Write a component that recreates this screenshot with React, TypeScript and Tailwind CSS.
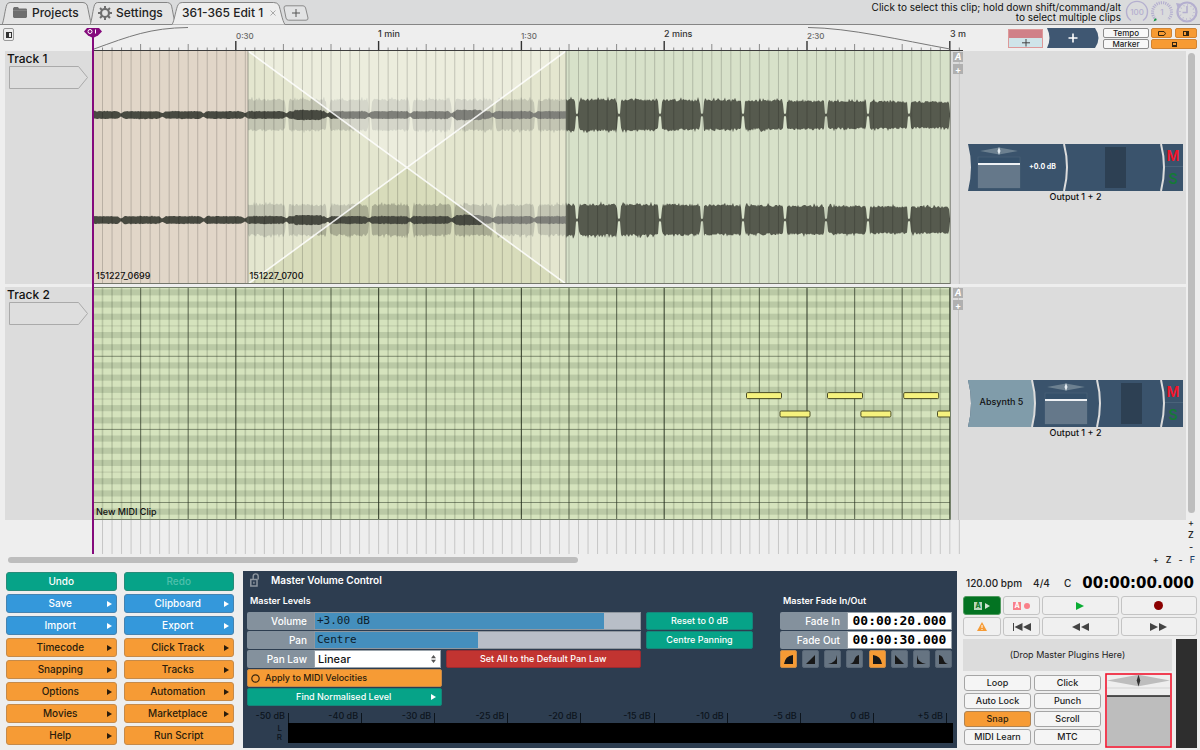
import React from "react";

const GRID_START = 93;
const BAR = 142.8;
const BEAT = BAR / 15;
const CLIP_END = 950;
const VIEW_END = 963;

function noise(n: number) {
  const v = Math.sin(n * 127.1 + 11.7) * 43758.5453;
  return v - Math.floor(v);
}

function wave(start: number, end: number, cy: number, amp: (x: number) => number) {
  const top: string[] = [];
  const bottom: string[] = [];
  for (let x = start; x <= end; x += 1) {
    const a = amp(x);
    const spikeTop = noise(x * 3 + cy) > 0.88 ? 1.12 : 1;
    const spikeBottom = noise(x * 5 + cy) > 0.88 ? 1.12 : 1;
    top.push(`${x.toFixed(1)},${(cy - a * (0.84 + noise(x + cy) * 0.16) * spikeTop).toFixed(1)}`);
    bottom.unshift(`${x.toFixed(1)},${(cy + a * (0.84 + noise(x * 2 + cy) * 0.16) * spikeBottom).toFixed(1)}`);
  }
  return `M${top.join("L")}L${bottom.join("L")}Z`;
}

const PERIOD = 41.5;
function quietAmp(x: number) {
  const p = (x - 123 + PERIOD * 10) % 41.3;
  const edge = Math.min(p, 41.3 - p);
  const swell = x > 294 && x < 322 ? 1.2 : x > 455 && x < 482 ? 1.4 : 0;
  return Math.min(4 + swell, 1.6 + edge * 0.7);
}
function loudAmp(x: number) {
  const p = (x - 247) % PERIOD;
  if (p > 38) return 1.4;
  const edge = Math.min(p, 38 - p);
  const level = x < 566 ? 16.5 : 17 - ((x - 566) / 384) * 3;
  return Math.min(level, 13 + edge * 3);
}

const beatXs = Array.from({ length: 92 }, (_, i) => GRID_START + i * BEAT).filter((x) => x < VIEW_END);

const centres = [115, 220];

function AudioTrack() {
  return (
    <svg viewBox="93 51 870 233" preserveAspectRatio="none" className="block h-[233px] w-full" aria-label="Audio clips">
      <rect x="93" y="51" width="870" height="233" fill="#dcdcdc" />
      <rect x="93" y="51" width="155" height="233" fill="#e1d6c8" />
      <rect x="248" y="51" width="318" height="233" fill="#d8dcbb" />
      <rect x="566" y="51" width="384" height="233" fill="#d7e1c9" />
      {centres.map((cy) => (
        <path key={cy} d={wave(248, 566, cy, loudAmp)} fill="#30332a" fillOpacity="0.28" />
      ))}
      <polygon points="248,51 566,51 248,284" fill="#fff" fillOpacity="0.3" />
      {centres.map((cy) => (
        <path key={cy} d={wave(93, 566, cy, quietAmp)} fill="#484a41" />
      ))}
      <polygon points="248,51 566,51 566,284" fill="#fff" fillOpacity="0.3" />
      {centres.map((cy) => (
        <path key={cy} d={wave(566, 950, cy, loudAmp)} fill="#565a4e" />
      ))}
      {beatXs.map((x) => (
        <line key={x} x1={x} x2={x} y1="51" y2="284" stroke="#000" strokeOpacity={x > CLIP_END ? 0.1 : 0.18} vectorEffect="non-scaling-stroke" />
      ))}
      <path d="M248 51L566 284M566 51L248 284" stroke="#fff" strokeOpacity="0.85" strokeWidth="1.6" fill="none" />
      <path d="M248 51V284M566 51V284M950.5 51V284" stroke="#6d7064" strokeOpacity="0.6" fill="none" />
      <path d="M93 283.5H950" stroke="#74776b" />
    </svg>
  );
}

const octaveTops = [283.2, 356.3, 429.4, 502.5];
const blackKeys = [1, 3, 5, 8, 10];
const notes = [
  [746, 392.6, 35],
  [779.5, 411, 30],
  [827, 392.6, 35],
  [860.4, 411, 30],
  [903.2, 392.6, 35],
  [937, 411, 30],
];

function MidiTrack() {
  return (
    <svg viewBox="93 287 870 233" preserveAspectRatio="none" className="block h-[233px] w-full" aria-label="MIDI clip">
      <defs>
        <clipPath id="midi-clip">
          <rect x="93" y="287" width="858" height="232" />
        </clipPath>
      </defs>
      <rect x="93" y="287" width="870" height="233" fill="#dcdcdc" />
      <g clipPath="url(#midi-clip)">
        <rect x="93" y="287" width="858" height="233" fill="#d5e3bd" />
        {octaveTops.map((t) => (
          <g key={t}>
            {blackKeys.map((k) => (
              <rect key={k} x="93" y={t + k * 6.1} width="858" height="6.1" fill="#bac9a5" />
            ))}
            <line x1="93" x2="951" y1={t + 42.7} y2={t + 42.7} stroke="#000" strokeOpacity="0.12" />
            <line x1="93" x2="951" y1={t} y2={t} stroke="#4e5a44" strokeOpacity="0.65" />
          </g>
        ))}
        {beatXs.map((x, i) => (
          <line key={x} x1={x} x2={x} y1="287" y2="520" stroke="#26301e" strokeWidth={i % 5 === 0 ? 1.2 : 1.6} strokeOpacity={i % 15 === 0 ? 0.8 : i % 5 === 0 ? 0.6 : 0.17} vectorEffect="non-scaling-stroke" />
        ))}
        {notes.map(([x, y, w]) => (
          <rect key={x} x={x + 0.5} y={y} width={w} height="6" rx="1.2" fill="#f6f27e" stroke="#4a4c25" />
        ))}
      </g>
      <path d="M93 287.5H950.5V519.5H93" fill="none" stroke="#74806a" />
      <path d="M958.5 287V520" stroke="#c4c4c4" />
    </svg>
  );
}

const rulerLabels = [
  { x: 236, text: "0:30", big: false },
  { x: 378, text: "1 min", big: true },
  { x: 521, text: "1:30", big: false },
  { x: 664, text: "2 mins", big: true },
  { x: 807, text: "2:30", big: false },
  { x: 950, text: "3 m", big: true },
];

function Ruler() {
  return (
    <div className="relative h-[26px]">
      <svg viewBox="93 25 870 26" preserveAspectRatio="none" className="block h-full w-full">
        {beatXs.map((x, i) => (
          <line key={x} x1={x} x2={x} y2="51" y1={i % 15 === 0 ? 41 : i % 5 === 0 ? 44 : 47.5} stroke={i % 15 === 0 ? "#333" : "#8a8a8a"} strokeWidth={i % 15 === 0 ? 1.4 : 1} />
        ))}
        <path d="M94 49C130 36 150 28 188 27.5" fill="none" stroke="#777" />
        <path d="M808 27.5C850 28 900 40 950 49" fill="none" stroke="#777" />
        <path d="M93 50.5H963" stroke="#3d3d3d" />
      </svg>
      {rulerLabels.map((l) => (
        <span
          key={l.text}
          className={
            l.big
              ? "absolute top-[3px] whitespace-nowrap text-[9px] leading-3 text-[#333]"
              : "absolute top-[5px] whitespace-nowrap text-[8px] leading-3 text-[#666]"
          }
          style={{ left: `${((l.x - 93) / 870) * 100}%` }}
        >
          {l.text}
        </span>
      ))}
    </div>
  );
}

function LaneButtons() {
  return (
    <div className="absolute right-0 top-[1px] flex w-[10px] flex-col gap-[2px]">
      <button aria-label="Automation" className="h-[10px] bg-[#b0b0b0] text-[9px] font-bold italic leading-[10px] text-white">A</button>
      <button aria-label="Add lane" className="h-[10px] bg-[#b0b0b0] text-[9px] font-bold leading-[9px] text-white">+</button>
    </div>
  );
}

function TrackHeader({ name }: { name: string }) {
  return (
    <div className="ml-[5px] h-[233px] bg-[#dcdcdc] pl-[2px]">
      <div className="text-[12px] leading-[15px] text-[#111]">{name}</div>
      <svg width="80" height="24" viewBox="0 0 80 24" className="ml-[2px] block">
        <path d="M.5 .5H69.5L78.5 11.5L69.5 22.5H.5Z" fill="#dedede" stroke="#aaa" />
      </svg>
    </div>
  );
}

function FaderArt({ x }: { x: number }) {
  return (
    <g>
      <path d={`M${x + 2} 7L${x + 21} 3.5L${x + 40} 7L${x + 21} 10.5Z`} fill="#6c8090" />
      <path d={`M${x + 21} 3L${x + 22.5} 7L${x + 21} 11L${x + 19.5} 7Z`} fill="#e5ecf1" />
      <rect x={x} y="13" width="42" height="31" fill="#35506a" stroke="#4b6177" strokeWidth=".7" />
      <rect x={x} y="20" width="42" height="24" fill="#65788a" />
      <rect x={x} y="19" width="42" height="2" fill="#eef1f4" />
    </g>
  );
}

function ChannelStrip({ instrument }: { instrument?: string }) {
  return (
    <div className="ml-[5px] w-[215px]">
      <div className="relative flex h-[47px] items-center">
        <svg viewBox="0 0 215 47" className="absolute inset-0 h-full w-full">
          <path d="M0 0H215V47H0Q6 23 0 0Z" fill="#3a536c" />
          {instrument && <path d="M0 0H64Q69 23 64 47H0Q6 23 0 0Z" fill="#809caa" />}
          <FaderArt x={instrument ? 77 : 10} />
          <rect x={instrument ? 153 : 137} y="3" width="21" height="41" fill="#2d4053" />
          {(instrument ? [64, 129, 193] : [96, 193]).map((x) => (
            <path key={x} d={`M${x} 0Q${x + 6} 23 ${x} 47`} fill="none" stroke="#dcdcdc" strokeWidth="2" />
          ))}
          <path d="M197 22.5H215" stroke="#4a637a" />
        </svg>
        {instrument ? (
          <span className="relative w-[67px] pb-[3px] text-center text-[9px] text-[#111]">{instrument}</span>
        ) : (
          <span className="relative ml-[61px] text-[7px] font-bold text-white">+0.0 dB</span>
        )}
        <div className="relative ml-auto mr-px flex h-[47px] w-[18px] flex-col text-[14px] font-semibold">
          <button aria-label="Mute" className="h-[23px] leading-[23px] text-[#f5132a]">M</button>
          <button aria-label="Solo" className="h-[23px] leading-[23px] text-[#147a35]">S</button>
        </div>
      </div>
      <div className="text-center text-[9px] leading-3 text-[#111]">Output 1 + 2</div>
    </div>
  );
}

function Tab({ children, active, className }: { children: React.ReactNode; active?: boolean; className: string }) {
  const fill = active ? "#eeeeee" : "#e4e4e4";
  return (
    <button role="tab" aria-selected={!!active} className={`relative flex h-[25px] items-center ${className}`}>
      <svg viewBox="0 0 100 25" preserveAspectRatio="none" className="absolute inset-0 h-full w-full">
        <path d="M0 24.5C2 22 3.5 8 5.5 4.5Q6.5 2.5 9 2.5H90Q93 2.5 94.5 5C96 9 97.5 21 100 24.5" fill={fill} stroke="#858585" vectorEffect="non-scaling-stroke" />
        {!active && <path d="M0 24.5H100" stroke="#858585" vectorEffect="non-scaling-stroke" />}
      </svg>
      <span className="relative flex items-center whitespace-nowrap text-[12px] text-[#222]">{children}</span>
    </button>
  );
}

function Header() {
  return (
    <header className="relative flex h-[25px] bg-[#dadbdc]">
      <div className="absolute inset-x-0 bottom-0 h-px bg-[#858585]" />
      <div role="tablist" className="flex">
        <Tab className="ml-[2px] w-[90px] pl-[11px]">
          <svg width="14" height="11" viewBox="0 0 14 11" className="mr-[5px]">
            <path d="M0 1.5L1 0H5L6 1.5H13.3L14 2.5V10L13 11H1L0 10Z" fill="#6e6e6e" />
            <path d="M0 3.5H14" stroke="#8b8b8b" strokeWidth=".7" />
          </svg>
          Projects
        </Tab>
        <Tab className="-ml-[2px] w-[86px] pl-[8px]">
          <svg width="14" height="14" viewBox="0 0 14 14" className="mr-[4px]">
            <circle cx="7" cy="7" r="4" fill="none" stroke="#6e6e6e" strokeWidth="2.2" />
            {[0, 45, 90, 135, 180, 225, 270, 315].map((a) => (
              <rect key={a} x="6" y="0" width="2" height="3" fill="#6e6e6e" transform={`rotate(${a} 7 7)`} />
            ))}
          </svg>
          Settings
        </Tab>
        <Tab active className="-ml-[4px] w-[113px] pl-[10px]">
          361-365 Edit 1
          <svg width="6" height="6" viewBox="0 0 6 6" className="ml-[7px]">
            <path d="M.5 .5L5.5 5.5M5.5 .5L.5 5.5" stroke="#aaa" />
          </svg>
        </Tab>
        <button aria-label="New tab" className="-ml-[2px] mt-[5px] h-[16px] w-[26px]">
          <svg viewBox="0 0 26 16" className="block h-full w-full">
            <path d="M3 .8H20Q22 .8 22.6 3L25 13Q25.3 15.2 23 15.2H5.5Q3.5 15.2 3 13L1 3Q.8 .8 3 .8Z" fill="#e2e3e4" stroke="#8a8a8a" />
            <path d="M13 4V12M9 8H17" stroke="#555" />
          </svg>
        </button>
      </div>
      <p className="ml-auto mr-[4px] pt-[2px] text-right text-[10px] font-normal leading-[10px] text-[#111]">
        Click to select this clip; hold down shift/command/alt
        <br />
        to select multiple clips
      </p>
      <svg width="74" height="24" viewBox="0 0 74 24" className="mr-[1px] font-['Inter']">
        <g fill="none" stroke="#b4afcf">
          <path d="M6 20.5A10.5 10.5 0 1 1 18 20.5" strokeWidth="1.4" />
          <path d="M31 19.5A9.5 9.5 0 1 1 43 19.5" strokeWidth="3" strokeDasharray="1.2 1" />
          <circle cx="62" cy="12" r="9.5" strokeWidth="2.2" />
          <circle cx="62" cy="12" r="7" strokeDasharray=".8 2.86" strokeWidth="1.4" />
          <path d="M62 6V12.5H57.5" strokeWidth="1.6" />
        </g>
        <path d="M51 3L57 4L53 9Z" fill="#b4afcf" />
        <text x="12" y="15" fontSize="8" textAnchor="middle" fill="#b4afcf">100</text>
        <text x="37" y="15" fontSize="8" textAnchor="middle" fill="#b4afcf">1</text>
        <path d="M28.5 21.5L30 18L32 20Z" fill="#149540" />
      </svg>
    </header>
  );
}

const miniOrange = "flex h-[10px] items-center justify-center rounded-[2px] border border-[#d08434] bg-[#f79b33]";
const miniWhite = "h-[10px] w-[46px] rounded-[2px] border border-[#8c8c8c] bg-[#f8f8f8] text-[8px] leading-[8px] text-[#222]";

function TrackTools() {
  return (
    <div className="flex h-[26px] justify-end gap-[4px] pr-[3px] pt-[3px]">
      <button aria-label="Add track" className="mt-px h-[19px] w-[35px] border border-[#d99]">
        <svg viewBox="0 0 33 17" className="block h-full w-full">
          <rect width="33" height="8" fill="#d08088" />
          <rect y="8" width="33" height="9" fill="#cfe4e9" />
          <path d="M17 9V16.5M13 12.8H21" stroke="#444" />
        </svg>
      </button>
      <button aria-label="Add plugin" className="h-[20px] w-[52px]">
        <svg viewBox="0 0 52 20" className="block h-full w-full">
          <path d="M0 0H48Q51.5 5 51.5 10T48 20H0Q5 10 0 0Z" fill="#3f5772" />
          <path d="M26 5.5V14.5M21.5 10H30.5" stroke="#fff" strokeWidth="1.6" />
        </svg>
      </button>
      <div className="flex flex-col gap-[1px]">
        <button className={miniWhite}>Tempo</button>
        <button className={miniWhite}>Marker</button>
      </div>
      <div className="-ml-[2px] grid grid-cols-2 gap-x-[2px] gap-y-[1px] self-start">
        <button aria-label="Tracks panel" className={`${miniOrange} w-[21px]`}>
          <svg width="8" height="5" viewBox="0 0 8 5"><path d="M.5 .5H6L7.5 2.5L6 4.5H.5Z" fill="none" stroke="#332511" /></svg>
        </button>
        <button aria-label="Right panel" className={`${miniOrange} w-[22px]`}>
          <svg width="6" height="5" viewBox="0 0 6 5"><rect x=".5" y=".5" width="5" height="4" fill="none" stroke="#332511" /><rect x="3" width="3" height="5" fill="#332511" /></svg>
        </button>
        <button aria-label="Bottom panel" className={`${miniOrange} col-span-2`}>
          <svg width="5" height="5" viewBox="0 0 5 5"><rect x=".5" y=".5" width="4" height="4" fill="none" stroke="#332511" /><rect y="3" width="5" height="2" fill="#332511" /></svg>
        </button>
      </div>
    </div>
  );
}

const menu: { label: string; tone: "green" | "blue" | "orange"; arrow?: boolean; dim?: boolean }[] = [
  { label: "Undo", tone: "green" },
  { label: "Redo", tone: "green", dim: true },
  { label: "Save", tone: "blue", arrow: true },
  { label: "Clipboard", tone: "blue", arrow: true },
  { label: "Import", tone: "blue", arrow: true },
  { label: "Export", tone: "blue", arrow: true },
  { label: "Timecode", tone: "orange", arrow: true },
  { label: "Click Track", tone: "orange", arrow: true },
  { label: "Snapping", tone: "orange", arrow: true },
  { label: "Tracks", tone: "orange", arrow: true },
  { label: "Options", tone: "orange", arrow: true },
  { label: "Automation", tone: "orange", arrow: true },
  { label: "Movies", tone: "orange", arrow: true },
  { label: "Marketplace", tone: "orange", arrow: true },
  { label: "Help", tone: "orange", arrow: true },
  { label: "Run Script", tone: "orange" },
];
const tones = {
  green: "bg-[#06a388] border-[#278b79] text-white",
  blue: "bg-[#3498db] border-[#4583b0] text-white",
  orange: "bg-[#f69b35] border-[#c58a4a] text-[#2a1c0c]",
};

function Arrow({ className }: { className?: string }) {
  return (
    <svg width="5" height="6" viewBox="0 0 5 6" className={className}>
      <path d="M0 0L5 3L0 6Z" fill="currentColor" />
    </svg>
  );
}

function MenuGrid() {
  return (
    <nav className="grid w-[228px] shrink-0 grid-cols-2 gap-x-[7px] gap-y-[3px] self-start pt-[1px]">
      {menu.map((m) => (
        <button key={m.label} disabled={m.dim} className={`flex h-[19px] items-center justify-center rounded-[3px] border text-[10px] ${tones[m.tone]}`}>
          {m.arrow && <span className="w-[7px]" />}
          <span className={m.dim ? "flex-1 text-[#4fc0ac]" : "flex-1"}>{m.label}</span>
          {m.arrow && <Arrow className="mr-[4px]" />}
        </button>
      ))}
    </nav>
  );
}

const labelCell = "flex w-[67px] shrink-0 items-center justify-end rounded-l-[2px] bg-[#84919d] pr-[7px] text-[10px] text-white";
const teal = "h-[18px] rounded-[2px] border border-[#14867a] bg-[#06a388] text-[9px] leading-4 text-white";

function SliderRow({ id, label, text, value }: { id: string; label: string; text: string; value: number }) {
  return (
    <div className="flex h-[18px]">
      <label htmlFor={id} className={labelCell}>{label}</label>
      <div className="relative flex flex-1 items-center border border-[#8f979f] bg-[#b8bec7]">
        <div className="absolute inset-y-0 left-0 bg-[#458fbd]" style={{ width: `${value}%` }} />
        <span className="relative pl-[2px] font-['DejaVu_Sans_Mono',monospace] text-[11px] font-normal text-[#0c1c2a]">{text}</span>
        <input id={id} type="range" defaultValue={value} className="absolute inset-0 h-full w-full opacity-0" />
      </div>
    </div>
  );
}

const fades = [
  { name: "Fade in convex", d: "M0 9Q1 1 9 0V9Z", on: true },
  { name: "Fade in linear", d: "M0 9L9 0V9Z", on: false },
  { name: "Fade in concave", d: "M0 9Q8 8 9 0V9Z", on: false },
  { name: "Fade in S", d: "M0 9C6 8 3 1 9 0V9Z", on: false },
  { name: "Fade out convex", d: "M0 0Q8 1 9 9H0Z", on: true },
  { name: "Fade out linear", d: "M0 0L9 9H0Z", on: false },
  { name: "Fade out concave", d: "M0 0Q1 8 9 9H0Z", on: false },
  { name: "Fade out S", d: "M0 0C6 1 3 8 9 9H0Z", on: false },
];

const meterMarks = ["-50 dB", "-40 dB", "-30 dB", "-25 dB", "-20 dB", "-15 dB", "-10 dB", "-5 dB", "0 dB", "+5 dB"];

function TimeRow({ id, label, value }: { id: string; label: string; value: string }) {
  return (
    <div className="flex h-[18px]">
      <label htmlFor={id} className={labelCell}>{label}</label>
      <input id={id} defaultValue={value} className="w-[105px] border border-[#9aa3ab] bg-white text-center font-['DejaVu_Sans_Mono',monospace] text-[13px] font-bold leading-4 text-black" />
    </div>
  );
}

function VolumePanel() {
  return (
    <section className="min-w-0 flex-1 bg-[#2d3d50] px-[4px] pb-[3px]">
      <div className="flex h-[18px] items-center gap-[12px] pl-[3px] text-white">
        <svg width="9" height="14" viewBox="0 0 9 14">
          <rect x=".8" y="6.5" width="6.2" height="6.5" fill="none" stroke="#8d959e" strokeWidth="1.5" />
          <path d="M3.2 6.5V3.5Q3.2 .9 5.7 .9T8.2 3.5V6.5M3.9 8.8V10.8" fill="none" stroke="#8d959e" strokeWidth="1.4" />
        </svg>
        <h2 className="text-[10px] font-semibold">Master Volume Control</h2>
      </div>
      <div className="flex text-white">
        <div className="flex min-w-0 flex-1 flex-col gap-[1px]">
          <h3 className="h-[22px] pl-[3px] text-[9px] font-semibold leading-6">Master Levels</h3>
          <div className="flex flex-col gap-[1px]">
            <div className="flex gap-[5px]">
              <div className="min-w-0 flex-1"><SliderRow id="volume" label="Volume" text="+3.00 dB" value={89} /></div>
              <button className={`${teal} w-[107px]`}>Reset to 0 dB</button>
            </div>
            <div className="flex gap-[5px]">
              <div className="min-w-0 flex-1"><SliderRow id="pan" label="Pan" text="Centre" value={50} /></div>
              <button className={`${teal} w-[107px]`}>Centre Panning</button>
            </div>
            <div className="mr-[112px] flex gap-[5px]">
              <div className="flex h-[18px] flex-1">
                <label htmlFor="panlaw" className={labelCell}>Pan Law</label>
                <div className="relative flex-1">
                  <select id="panlaw" className="block h-[18px] w-full appearance-none border border-[#9aa3ab] bg-white pl-[3px] text-[11px] leading-4 text-[#111]">
                    <option>Linear</option>
                  </select>
                  <svg width="5" height="8" viewBox="0 0 5 8" className="pointer-events-none absolute right-[5px] top-[5px]">
                    <path d="M0 3.2L2.5 0L5 3.2ZM0 4.8L2.5 8L5 4.8Z" fill="#555" />
                  </svg>
                </div>
              </div>
              <button className="h-[18px] flex-1 rounded-[2px] border border-[#9b2b32] bg-[#c23431] text-[9px] leading-4 text-white">Set All to the Default Pan Law</button>
            </div>
            <div className="mr-[112px] grid grid-cols-2 gap-x-[5px] gap-y-[1px]">
              <button className="col-start-1 flex h-[18px] items-center rounded-[2px] border border-[#c58a4a] bg-[#f69b35] pl-[3px] text-[9px] text-[#2a1c0c]">
                <svg width="9" height="9" viewBox="0 0 9 9" className="mr-[5px]"><circle cx="4.5" cy="4.5" r="3.7" fill="none" stroke="#3a270f" strokeWidth="1.2" /></svg>
                Apply to MIDI Velocities
              </button>
              <button className={`${teal} col-start-1 flex items-center justify-center`}>
                <span className="flex-1 pl-[9px]">Find Normalised Level</span>
                <Arrow className="mr-[5px]" />
              </button>
            </div>
          </div>
        </div>
        <div className="ml-[27px] mr-[1px] flex w-[172px] flex-col gap-[1px]">
          <h3 className="h-[22px] pl-[3px] text-[9px] font-semibold leading-6">Master Fade In/Out</h3>
          <TimeRow id="fadein" label="Fade In" value="00:00:20.000" />
          <TimeRow id="fadeout" label="Fade Out" value="00:00:30.000" />
          <div className="flex justify-between">
            {fades.map((f) => (
              <button
                key={f.name}
                aria-label={f.name}
                className={
                  f.on
                    ? "flex h-[18px] w-[17px] items-center justify-center rounded-[2px] border border-[#c58a4a] bg-[#f69b35]"
                    : "flex h-[18px] w-[17px] items-center justify-center rounded-[2px] border border-[#596776] bg-[#667482]"
                }
              >
                <svg width="9" height="9" viewBox="0 0 9 9"><path d={f.d} fill="#181818" /></svg>
              </button>
            ))}
          </div>
        </div>
      </div>
      <div className="mt-[3px] flex h-[34px] text-[8px] text-[#0c141c]">
        <div className="flex w-[41px] shrink-0 flex-col items-end pr-[6px] pt-[2px] leading-[9px]">
          <span className="-mr-[3px] h-[13px] whitespace-nowrap text-[9px]">{meterMarks[0]}</span>
          <span>L</span>
          <span>R</span>
        </div>
        <div className="flex min-w-0 flex-1 flex-col">
          <div className="flex h-[14px] pr-[6px]">
            <div className="mt-[4px] w-px bg-[#0c141c]" />
            {meterMarks.slice(1).map((m) => (
              <div key={m} className="flex flex-1 justify-end">
                <span className="pt-[2px] pr-[3px] text-[9px] leading-[9px]">{m}</span>
                <span className="mt-[4px] w-px bg-[#0c141c]" />
              </div>
            ))}
          </div>
          <div className="h-[20px] bg-black" />
        </div>
      </div>
    </section>
  );
}

const tbtn = "flex h-[19px] items-center justify-center rounded-[3px] border border-[#c4c4c4] bg-[#f0f0f0]";

function Transport() {
  return (
    <section className="flex w-[234px] shrink-0 flex-col">
      <div className="flex h-[25px] items-center pl-[3px] pr-[3px] text-[10px] text-[#222]">
        <span>120.00 bpm</span>
        <span className="ml-[11px]">4/4</span>
        <span className="ml-[14px]">C</span>
        <span className="ml-auto font-['DejaVu_Sans',sans-serif] text-[15px] font-bold text-black">00:00:00.000</span>
      </div>
      <div className="grid grid-cols-[38px_37px_1fr_1fr] gap-[2px]">
        <button aria-label="Automation read" className="flex h-[19px] items-center justify-center gap-[3px] rounded-[3px] border border-[#4f9a5e] bg-[#037322]">
          <span className="h-[8px] w-[8px] bg-[#b9d6bd] text-[7px] font-bold leading-[8px] text-[#037322]">A</span>
          <Arrow className="text-[#cfe3d2]" />
        </button>
        <button aria-label="Automation write" className={`${tbtn} gap-[3px]`}>
          <span className="h-[8px] w-[8px] bg-[#f98089] text-[7px] font-bold leading-[8px] text-white">A</span>
          <span className="h-[6px] w-[6px] rounded-full bg-[#f98089]" />
        </button>
        <button aria-label="Play" className={tbtn}>
          <svg width="8" height="8" viewBox="0 0 8 8"><path d="M0 0L8 4L0 8Z" fill="#09ad33" /></svg>
        </button>
        <button aria-label="Record" className={tbtn}><span className="h-[9px] w-[9px] rounded-full bg-[#8b0000]" /></button>
        <button aria-label="Warnings" className={tbtn}>
          <svg width="10" height="9" viewBox="0 0 10 9"><path d="M5 0L10 9H0Z" fill="#f69b35" /><path d="M5 3V6M5 7V8" stroke="#fff" /></svg>
        </button>
        <button aria-label="Return to start" className={tbtn}>
          <svg width="18" height="8" viewBox="0 0 18 8"><path d="M.5 0V8" stroke="#444" /><path d="M9.5 0V8L1.5 4ZM18 0V8L10 4Z" fill="#444" /></svg>
        </button>
        <button aria-label="Rewind" className={tbtn}>
          <svg width="17" height="8" viewBox="0 0 17 8"><path d="M8 0V8L0 4ZM17 0V8L9 4Z" fill="#444" /></svg>
        </button>
        <button aria-label="Fast forward" className={tbtn}>
          <svg width="17" height="8" viewBox="0 0 17 8"><path d="M0 0V8L8 4ZM9 0V8L17 4Z" fill="#444" /></svg>
        </button>
      </div>
      <div className="mt-[3px] flex flex-1 gap-[4px]">
        <div className="flex flex-1 flex-col gap-[2px]">
          <div className="flex h-[32px] items-center justify-center bg-[#dcdcdc] text-[9px] font-normal text-[#222]">(Drop Master Plugins Here)</div>
          <div className="flex flex-1 justify-between">
            <div className="ml-px mt-[2px] grid grid-cols-2 gap-x-[3px] gap-y-[2px] self-start">
              {["Loop", "Click", "Auto Lock", "Punch", "Snap", "Scroll", "MIDI Learn", "MTC"].map((t) => (
                <button
                  key={t}
                  className={
                    t === "Snap"
                      ? "h-[16px] w-[67px] rounded-[3px] border border-[#b08351] bg-[#f69b35] text-[9px] leading-[14px] text-[#2a1c0c]"
                      : "h-[16px] w-[67px] rounded-[3px] border border-[#a5a5a5] bg-[#f5f5f5] text-[9px] leading-[14px] text-[#222]"
                  }
                >
                  {t}
                </button>
              ))}
            </div>
            <svg width="67" height="75" viewBox="0 0 67 75" aria-label="Master fader">
              <rect x="1" y="1" width="65" height="73" fill="#eee" stroke="#f0142d" strokeWidth="1.6" />
              <path d="M2 7.5L33.5 1.8L65 7.5L33.5 13.2Z" fill="#bdbdbd" />
              <path d="M33.5 1.5L35.3 7.5L33.5 13.5L31.7 7.5Z" fill="#333" />
              <path d="M2 15H65" stroke="#d4d4d4" />
              <rect x="2" y="23" width="63" height="50" fill="#bdbdbd" />
              <path d="M2 23H65" stroke="#222" strokeWidth="1.4" />
            </svg>
          </div>
        </div>
        <div className="w-[21px] bg-[#2e2e2e]" />
      </div>
    </section>
  );
}

export default function App() {
  return (
    <main className="min-h-screen bg-[#eeeeee] font-['Inter',sans-serif] font-medium">
      <Header />
      <div className="flex">
        <div className="w-[93px] shrink-0">
          <div className="h-[26px] pl-[3px] pt-[3px]">
            <button aria-label="Toggle track headers" className="flex h-[13px] w-[11px] items-center justify-center rounded-[2px] border border-[#999]">
              <svg width="6" height="6" viewBox="0 0 6 6"><rect x=".5" y=".5" width="5" height="5" fill="none" stroke="#333" /><rect width="3" height="6" fill="#333" /></svg>
            </button>
          </div>
          <div className="flex flex-col gap-[3px]">
            <TrackHeader name="Track 1" />
            <TrackHeader name="Track 2" />
          </div>
        </div>
        <div className="relative min-w-0 flex-1">
          <Ruler />
          <div className="flex flex-col gap-[3px]">
            <div className="relative">
              <AudioTrack />
              <span className="absolute bottom-[2px] left-[3px] text-[9px] leading-3 text-[#111]">151227_0699</span>
              <span className="absolute bottom-[2px] left-[18%] text-[9px] leading-3 text-[#111]">151227_0700</span>
              <LaneButtons />
            </div>
            <div className="relative">
              <MidiTrack />
              <span className="absolute bottom-[2px] left-[3px] text-[9px] leading-3 text-[#111]">New MIDI Clip</span>
              <LaneButtons />
            </div>
          </div>
          <svg viewBox="93 520 870 34" preserveAspectRatio="none" className="block h-[34px] w-full">
            {beatXs.map((x) => (
              <line key={x} x1={x} x2={x} y1="520" y2="554" stroke="#c6c6c6" vectorEffect="non-scaling-stroke" />
            ))}
          </svg>
          <div className="absolute -left-px bottom-0 top-[4px] w-[2px] bg-[#840a7c]" />
          <svg width="18" height="11" viewBox="0 0 18 11" className="absolute -left-[9px] top-[2px]">
            <path d="M3 1H15L18 4.5L14 8.5L9 11L4 8.5L0 4.5Z" fill="#840a7c" />
            <circle cx="6" cy="4.5" r="2" fill="none" stroke="#fff" />
            <path d="M11.5 2.5V6.5" stroke="#fff" />
          </svg>
        </div>
        <div className="w-[237px] shrink-0">
          <TrackTools />
          <div className="flex">
            <div className="flex flex-1 flex-col gap-[3px]">
              <div className="h-[233px] bg-[#dcdcdc] pt-[93px]"><ChannelStrip /></div>
              <div className="h-[233px] bg-[#dcdcdc] pt-[93px]"><ChannelStrip instrument="Absynth 5" /></div>
            </div>
            <div className="flex w-[14px] flex-col items-center pr-[4px] pt-[2px]">
              <div className="h-[460px] w-[7px] rounded-full bg-[#bdbdbd]" />
              <div className="flex flex-col pt-[4px] text-[9px] leading-[12px] text-[#222]">
                <button aria-label="Zoom in vertically">+</button>
                <button aria-label="Vertical zoom">Z</button>
                <button aria-label="Zoom out vertically">-</button>
              </div>
            </div>
          </div>
        </div>
      </div>
      <div className="flex h-[17px] items-start pl-[8px] pr-[5px]">
        <div className="mt-[3px] h-[6px] w-[48%] rounded-full bg-[#bdbdbd]" />
        <div className="ml-auto flex gap-[7px] text-[9px] leading-3 text-[#222]">
          <button aria-label="Zoom in">+</button>
          <button aria-label="Horizontal zoom">Z</button>
          <button aria-label="Zoom out">-</button>
          <button aria-label="Fit" className="text-[#1d3f6b]">F</button>
        </div>
      </div>
      <div className="flex pl-[6px] pr-[3px]">
        <MenuGrid />
        <div className="ml-[9px] mr-[6px] flex min-w-0 flex-1"><VolumePanel /></div>
        <Transport />
      </div>
    </main>
  );
}
